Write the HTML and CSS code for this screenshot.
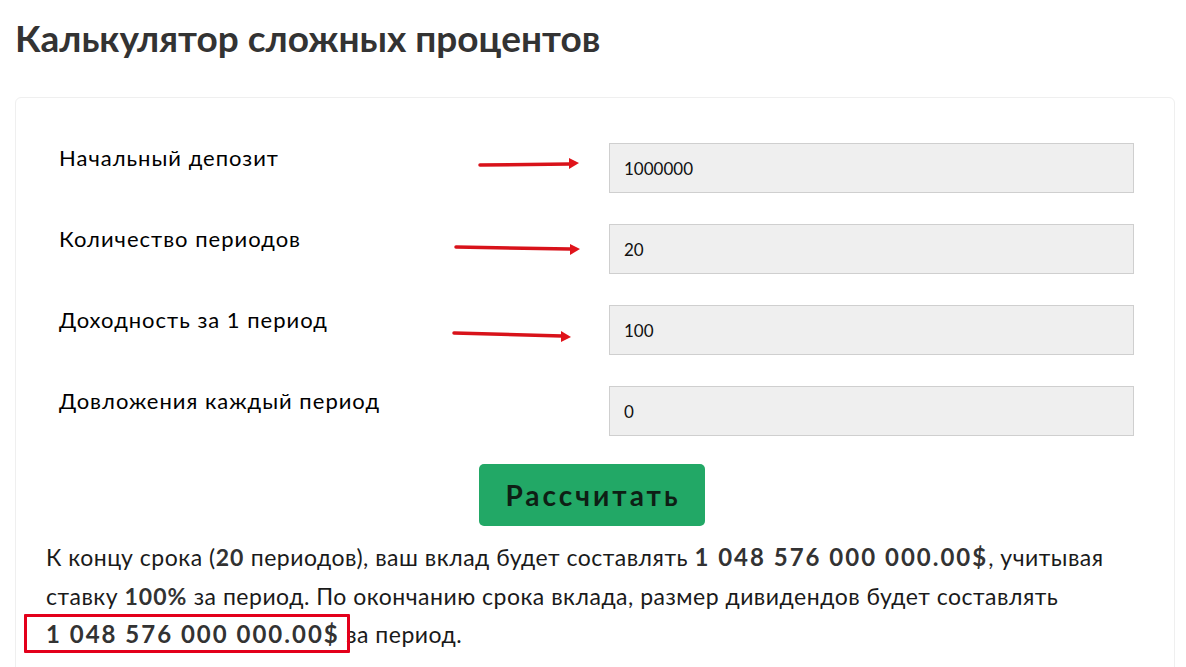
FILE: index.html
```html
<!DOCTYPE html>
<html lang="ru">
<head>
<meta charset="utf-8">
<title>Калькулятор сложных процентов</title>
<link rel="stylesheet" href="styles.css">
</head>
<body>
<h1 class="title">Калькулятор сложных процентов</h1>
<div class="card">
  <div class="form">
    <div class="row"><label class="label">Начальный депозит</label><input class="field" value="1000000"></div>
    <div class="row"><label class="label">Количество периодов</label><input class="field" value="20"></div>
    <div class="row"><label class="label">Доходность за 1 период</label><input class="field" value="100"></div>
    <div class="row"><label class="label">Довложения каждый период</label><input class="field" value="0"></div>
  </div>
  <div class="actions"><button class="btn">Рассчитать</button></div>
  <p class="result">К концу срока (<b>20</b> периодов), ваш вклад будет составлять <b class="num">1 048 576 000 000.00$</b>, учитывая ставку <b>100%</b> за период. По окончанию срока вклада, размер дивидендов будет составлять <span class="marked"><b class="num">1 048 576 000 000.00$</b></span> за период.</p>
  <svg class="arrows" viewBox="0 0 1158 600" width="1158" height="600">
    <g fill="#e0141b" stroke="#d8121a" stroke-width="3.5" stroke-linecap="round">
      <line x1="464" y1="67" x2="554" y2="66"/>
      <polygon stroke="none" points="563,65 553,60 553,71"/>
      <line x1="440" y1="149" x2="554" y2="151"/>
      <polygon stroke="none" points="564,151 554,146 554,157"/>
      <line x1="438" y1="235" x2="546" y2="238"/>
      <polygon stroke="none" points="555,239 545,233 545,244"/>
    </g>
  </svg>
</div>
</body>
</html>
```

FILE: styles.css
```css
html, body {
  margin: 0;
  padding: 0;
  background: #ffffff;
}

body {
  font-family: "Lato", "Noto Sans", sans-serif;
  color: #111;
  overflow: hidden;
}

.title {
  margin: 16px 0 38px 15px;
  font-size: 37px;
  line-height: 43px;
  font-weight: 700;
  color: #333;
}

.card {
  position: relative;
  box-sizing: border-box;
  width: 1160px;
  margin-left: 15px;
  padding: 45px 40px 40px 43px;
  border: 1px solid #efefef;
  border-radius: 6px;
}

.form {
  display: flex;
  flex-direction: column;
  gap: 31px;
}

.row {
  display: grid;
  grid-template-columns: 1fr 525px;
  align-items: start;
}

.label {
  font-size: 22px;
  line-height: 30px;
  letter-spacing: 1px;
  color: #000;
}

.field {
  box-sizing: border-box;
  height: 50px;
  width: 525px;
  padding: 0 14px;
  border: 1px solid #cfcfcf;
  border-radius: 0;
  background: #efefef;
  font-family: inherit;
  font-size: 17px;
  color: #111;
  outline: none;
}

.actions {
  display: flex;
  justify-content: center;
  margin-top: 28px;
  padding-right: 10px;
}

.btn {
  width: 226px;
  height: 62px;
  padding: 0 0 0 3px;
  border: none;
  border-radius: 5px;
  background: #22a866;
  color: #0e1f15;
  font-family: inherit;
  font-size: 28px;
  font-weight: 700;
  letter-spacing: 3px;
  cursor: pointer;
}

.result {
  margin: 12px 0 0 -13px;
  font-size: 23px;
  line-height: 38.5px;
  letter-spacing: 0.5px;
  color: #1a1a1a;
}

.result b {
  color: #333;
  font-weight: 700;
  letter-spacing: 1px;
}

.result .num {
  font-size: 24px;
  letter-spacing: 2px;
  white-space: nowrap;
}

.marked {
  position: relative;
}

.marked::before {
  content: "";
  position: absolute;
  left: -22px;
  right: -10px;
  top: -6px;
  bottom: -5px;
  border: 3px solid #e3001b;
  border-radius: 1px;
}

.arrows {
  position: absolute;
  left: 0;
  top: 0;
  pointer-events: none;
}
```
